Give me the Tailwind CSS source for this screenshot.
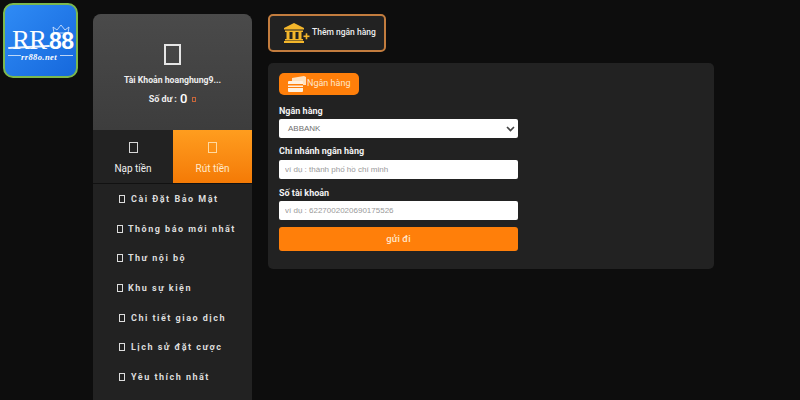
<!DOCTYPE html>
<html lang="en">
<head>
    <meta charset="UTF-8">
    <meta name="viewport" content="width=device-width, initial-scale=1.0">
    <title>Thêm ngân hàng</title>
    <script src="https://cdn.jsdelivr.net/npm/@tailwindcss/browser@4"></script>
</head>
<body class="bg-[#0d0d0d] font-['Roboto','Liberation_Sans',sans-serif] text-white">
    <div class="flex h-[400px] w-[800px] overflow-hidden">
        <!-- Logo -->
        <div class="w-[93px] shrink-0 pl-[3px] pt-[3px]">
            <div class="relative h-[75px] w-[75px] overflow-hidden rounded-[10px] border-2 border-[#7cb84e] bg-gradient-to-br from-[#2f8bf5] to-[#1668dc]">
                <svg class="absolute left-[47px] top-[19px]" width="18" height="11" viewBox="0 0 18 11" fill="none" stroke="#dceaff" stroke-width="0.8"><path d="M2 9 L1 3 L5 6 L9 1 L13 6 L17 3 L16 9 Z"/></svg>
                <div class="absolute left-[7px] top-[24px] font-['Liberation_Serif',serif] text-[27px] leading-[22px] tracking-[-1px] text-white">RR</div>
                <div class="absolute left-[44px] top-[24px] font-['Liberation_Sans',sans-serif] text-[23px] font-bold leading-[24px] tracking-[-0.5px] text-white">88</div>
                <div class="absolute left-[3px] top-[41px] h-[2px] w-[42px] -rotate-3 rounded-full bg-white/90"></div>
                <div class="absolute left-[3px] top-[50px] h-px w-[13px] bg-white/70"></div>
                <div class="absolute left-[55px] top-[50px] h-px w-[13px] bg-white/70"></div>
                <div class="absolute left-[16px] top-[47px] font-['Liberation_Serif',serif] text-[8.5px] font-bold italic leading-[10px] tracking-[0.4px] text-white">rr88o.net</div>
            </div>
        </div>

        <!-- Sidebar -->
        <aside class="mt-[14px] w-[159px] shrink-0 overflow-hidden rounded-t-[8px] bg-[#222222]">
            <div class="flex h-[116px] flex-col items-center bg-gradient-to-b from-[#4a4a4a] to-[#3d3d3d] pt-[30px]">
                <span class="h-[21px] w-[17px] border-2 border-[#e5e5e5]"></span>
                <p class="mt-[9px] text-[8.7px] font-bold leading-[12px] text-[#eeeeee]">Tài Khoản hoanghung9...</p>
                <div class="mt-[6px] flex items-center">
                    <span class="text-[9px] font-bold leading-[14px] text-[#eeeeee]">Số dư :</span>
                    <span class="ml-[3px] text-[13px] font-medium leading-[14px]">0</span>
                    <span class="ml-[5px] h-[5px] w-[4px] border border-[#c8663a]"></span>
                </div>
            </div>
            <div class="flex h-[54px] border-b border-[#111111]">
                <div class="flex w-[80px] flex-col items-center bg-[#222222] pt-[12px]">
                    <span class="h-[11px] w-[9px] border border-[#d8d8d8]"></span>
                    <span class="mt-[9px] text-[10px] leading-[14px] text-[#f0f0f0]">Nạp tiền</span>
                </div>
                <div class="flex flex-1 flex-col items-center bg-gradient-to-b from-[#ff9d1e] to-[#f47a05] pt-[12px]">
                    <span class="h-[11px] w-[9px] border border-[#ffd9a0]"></span>
                    <span class="mt-[9px] text-[10px] leading-[14px] text-[#ffe9cc]">Rút tiền</span>
                </div>
            </div>
            <ul class="pt-[8px] text-[9px] font-bold tracking-[1.5px] text-[#dddddd]">
                <li class="flex h-[29.7px] items-start pl-[26px] pt-[1px] leading-[12px]"><span class="mr-[6px] mt-[2px] h-[8px] w-[6px] border border-[#dddddd]"></span>Cài Đặt Bảo Mật</li>
                <li class="flex h-[29.7px] items-start pl-[24px] pt-[1px] leading-[12px]"><span class="mr-[5px] mt-[2px] h-[8px] w-[6px] border border-[#dddddd]"></span>Thông báo mới nhất</li>
                <li class="flex h-[29.7px] items-start pl-[24px] pt-[1px] leading-[12px]"><span class="mr-[5px] mt-[2px] h-[8px] w-[6px] border border-[#dddddd]"></span>Thư nội bộ</li>
                <li class="flex h-[29.7px] items-start pl-[24px] pt-[1px] leading-[12px]"><span class="mr-[5px] mt-[2px] h-[8px] w-[6px] border border-[#dddddd]"></span>Khu sự kiện</li>
                <li class="flex h-[29.7px] items-start pl-[26px] pt-[1px] leading-[12px]"><span class="mr-[6px] mt-[2px] h-[8px] w-[6px] border border-[#dddddd]"></span>Chi tiết giao dịch</li>
                <li class="flex h-[29.7px] items-start pl-[26px] pt-[1px] leading-[12px]"><span class="mr-[6px] mt-[2px] h-[8px] w-[6px] border border-[#dddddd]"></span>Lịch sử đặt cược</li>
                <li class="flex h-[29.7px] items-start pl-[26px] pt-[1px] leading-[12px]"><span class="mr-[6px] mt-[2px] h-[8px] w-[6px] border border-[#dddddd]"></span>Yêu thích nhất</li>
            </ul>
        </aside>

        <!-- Main -->
        <main class="ml-4 mt-[14px] w-[446px] shrink-0">
            <button class="flex h-[38px] w-[118px] items-center rounded-[5px] border-2 border-[#c27c3e] bg-[#222222] pl-[13px]">
                <svg width="28" height="20" viewBox="0 0 26 20" fill="#f3b62b">
                    <path d="M10 0 L20 5 L20 6.5 L0 6.5 L0 5 Z"/>
                    <rect x="1" y="7.5" width="18" height="1.5"/>
                    <rect x="2.5" y="9" width="3" height="7"/>
                    <rect x="8.5" y="9" width="3" height="7"/>
                    <rect x="14.5" y="9" width="3" height="7"/>
                    <rect x="1" y="16" width="18" height="1.5"/>
                    <rect x="0" y="18" width="20" height="2"/>
                    <rect x="19.5" y="12.5" width="6" height="1.6"/>
                    <rect x="21.7" y="10.3" width="1.6" height="6"/>
                </svg>
                <span class="mb-[2px] ml-[1px] text-[8.5px] font-medium text-[#eeeeee]">Thêm ngân hàng</span>
            </button>

            <section class="mt-[11px] h-[206px] rounded-[5px] bg-[#222222] px-[11px] pt-[10px]">
                <div class="flex h-[22px] w-[80px] items-center rounded-[5px] bg-[#ff7f0a] pl-[9px]">
                    <svg width="19" height="16" viewBox="0 0 19 16">
                        <path d="M4 2 L16 0 L18 1 L18 9 L4 9 Z" fill="#ffe1bf"/>
                        <rect x="0" y="5" width="15" height="11" rx="1" fill="#fff1e0"/>
                        <rect x="0" y="8" width="15" height="1.5" fill="#ff7f0a"/>
                        <rect x="0" y="11" width="15" height="1" fill="#ff7f0a"/>
                    </svg>
                    <span class="text-[9px] text-[#ffe7cc]">Ngân hàng</span>
                </div>

                <label class="mt-[10px] block text-[9px] font-bold leading-[12px] text-[#f2f2f2]">Ngân hàng</label>
                <div class="mt-[2px] flex h-[19px] w-[239px] items-center justify-between rounded-[2px] bg-white pl-[9px] pr-[3px]">
                    <span class="font-['Liberation_Sans',sans-serif] text-[8px] text-[#6f6f6f]">ABBANK</span>
                    <svg width="9" height="6" viewBox="0 0 9 6" fill="none" stroke="#444444" stroke-width="1.6"><path d="M1 1 L4.5 4.5 L8 1"/></svg>
                </div>

                <label class="mt-[7px] block text-[9px] font-bold leading-[12px] text-[#f2f2f2]">Chi nhánh ngân hàng</label>
                <input type="text" placeholder="ví dụ : thành phố hồ chí minh" class="mt-[3px] block h-[19px] w-[239px] rounded-[2px] bg-white pl-[6px] font-['Liberation_Sans',sans-serif] text-[8px] placeholder:text-[#9a9a9a]">

                <label class="mt-[8px] block text-[9px] font-bold leading-[12px] text-[#f2f2f2]">Số tài khoản</label>
                <input type="text" placeholder="ví dụ : 6227002020690175526" class="mt-[2px] block h-[19px] w-[239px] rounded-[2px] bg-white pl-[6px] font-['Liberation_Sans',sans-serif] text-[8px] placeholder:text-[#9a9a9a]">

                <button class="mt-[7px] block h-[24px] w-[239px] rounded-[3px] bg-[#ff7f0a] text-[9.5px] font-medium text-[#ffe7cc]">gửi đi</button>
            </section>
        </main>
    </div>
</body>
</html>
